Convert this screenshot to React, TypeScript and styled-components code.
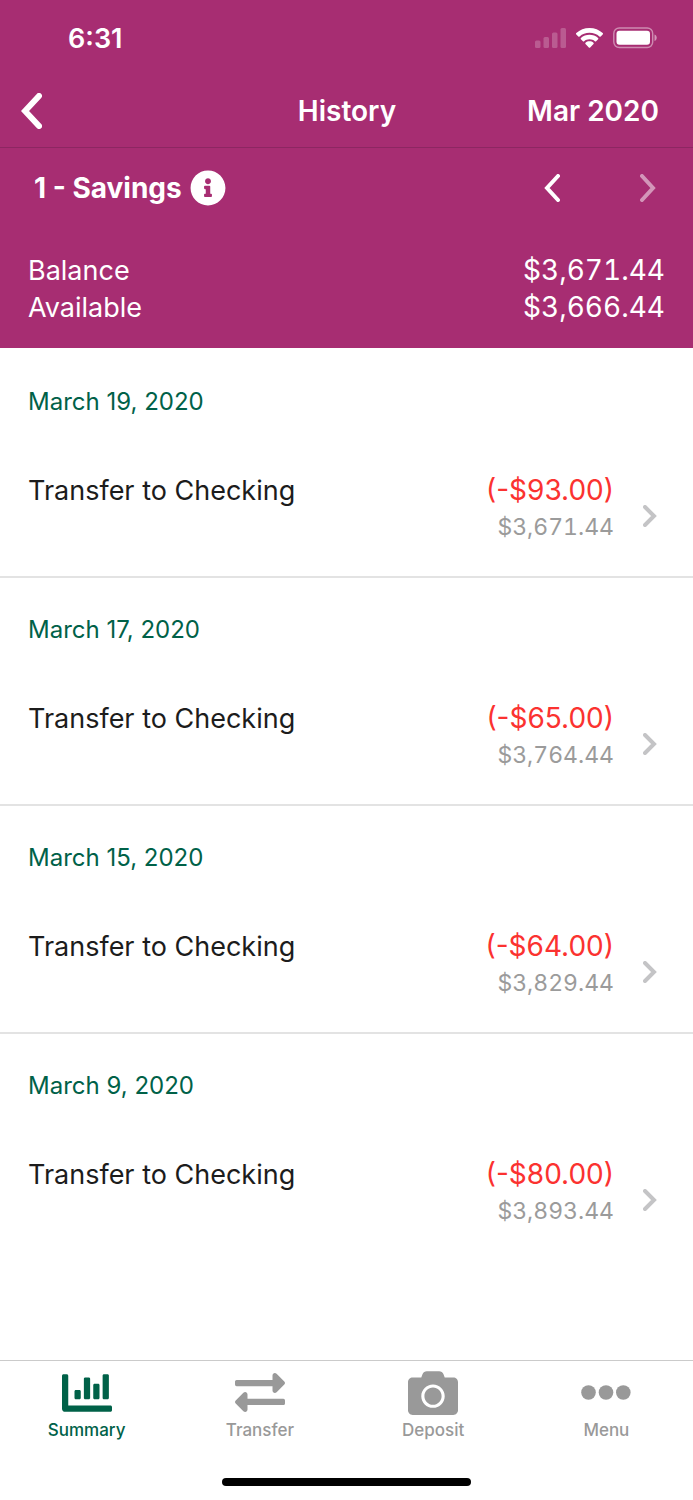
import React from 'react';
import styled, { createGlobalStyle } from 'styled-components';
import { FaCamera, FaChartBar, FaInfoCircle } from 'react-icons/fa';

const GlobalStyle = createGlobalStyle`
  *, *::before, *::after { box-sizing: border-box; }
  body {
    margin: 0;
    background: #fff;
    color: #1c1c1c;
    font-family: Inter, Roboto, sans-serif;
    -webkit-font-smoothing: antialiased;
  }
  button {
    margin: 0;
    padding: 0;
    border: 0;
    background: none;
    color: inherit;
    font: inherit;
    cursor: pointer;
  }
  h1, h2, h3, p, dl, dd, ul { margin: 0; padding: 0; }
  svg { display: block; }
`;

const Screen = styled.div`
  display: flex;
  flex-direction: column;
  min-height: 100vh;
`;

const Header = styled.header`
  background: #a72d72;
  color: #fff;
`;

const StatusBar = styled.div`
  display: flex;
  align-items: center;
  justify-content: space-between;
  height: 76px;
  padding: 0 36px 0 68px;
  font-size: 27px;
  font-weight: 600;
`;

const StatusIcons = styled.div`
  display: flex;
  align-items: center;
  gap: 10px;
`;

const TitleBar = styled.div`
  display: grid;
  grid-template-columns: 1fr auto 1fr;
  align-items: center;
  height: 72px;
  padding: 0 34px 2px 21px;
  border-bottom: 1px solid #8d2662;
`;

const Title = styled.h1`
  font-size: 28px;
  font-weight: 600;
  padding-left: 14px;
`;

const BackButton = styled.button`
  justify-self: start;
`;

const MonthButton = styled.button`
  && {
    justify-self: end;
    font-size: 28px;
    font-weight: 600;
  }
`;

const AccountBar = styled.div`
  display: flex;
  align-items: center;
  height: 80px;
  padding: 0 37px 0 34px;
`;

const AccountName = styled.h2`
  margin-right: 8px;
  font-size: 28px;
  font-weight: 700;
`;

const Pager = styled.div`
  display: flex;
  gap: 80px;
  margin-left: auto;
`;

const PagerButton = styled.button`
  &:disabled { opacity: 0.5; }
`;

const Balances = styled.dl`
  padding: 24px 28px 22px;
`;

const BalanceRow = styled.div`
  display: flex;
  justify-content: space-between;
  font-size: 27px;
  line-height: 37px;
`;

const Amount = styled.dd`
  font-size: 28px;
  font-variant-numeric: tabular-nums;
`;

const List = styled.ul`
  flex: 1;
  list-style: none;
`;

const Item = styled.li`
  height: 228px;
  padding-top: 36px;
  & + & { border-top: 2px solid #e3e3e3; padding-top: 34px; }
`;

const DateHeading = styled.h3`
  padding: 0 28px;
  color: #006148;
  font-size: 24px;
  font-weight: 400;
  line-height: 36px;
`;

const Entry = styled.button`
  && {
    display: flex;
    width: 100%;
    padding: 52px 36px 0 28px;
    text-align: left;
  }
`;

const Description = styled.span`
  flex: 1;
  font-size: 27px;
  line-height: 37px;
`;

const Figures = styled.span`
  display: flex;
  flex-direction: column;
  align-items: flex-end;
  margin-right: 29px;
  line-height: 37px;
`;

const Change = styled.span`
  color: #fb3230;
  font-size: 28px;
`;

const Running = styled.span`
  color: #9b9b9b;
  font-size: 23px;
  font-variant-numeric: tabular-nums;
`;

const EntryArrow = styled.span`
  align-self: center;
  padding-top: 14px;
  color: #c4c4c6;
`;

const Footer = styled.footer`
  display: flex;
  flex-direction: column;
  align-items: center;
  height: 140px;
  border-top: 1px solid #cbcbcb;
`;

const Tabs = styled.nav`
  display: grid;
  grid-template-columns: repeat(4, 1fr);
  width: 100%;
`;

const Tab = styled.button<{ $active?: boolean }>`
  && {
    display: flex;
    flex-direction: column;
    align-items: center;
    padding-top: 6px;
    color: ${(p) => (p.$active ? '#006148' : '#999')};
    font-size: 17px;
    font-weight: 500;
    line-height: 24px;
  }
`;

const TabIcon = styled.span`
  display: grid;
  place-items: center;
  height: 51px;
`;

const HomeIndicator = styled.div`
  width: 36%;
  height: 8px;
  margin: auto 0 14px;
  border-radius: 4px;
  background: #000;
`;

type ChevronProps = { dir: 'left' | 'right'; w: number; h: number; stroke: number };

function Chevron({ dir, w, h, stroke }: ChevronProps) {
  const s = stroke / 2;
  const near = dir === 'left' ? w - s : s;
  const tip = dir === 'left' ? s + 1 : w - s - 1;
  return (
    <svg width={w} height={h} viewBox={`0 0 ${w} ${h}`} fill="none" stroke="currentColor"
      strokeWidth={stroke} strokeLinecap="round" strokeLinejoin="miter" aria-hidden="true">
      <path d={`M${near} ${s}L${tip} ${h / 2}L${near} ${h - s}`} />
    </svg>
  );
}

function SignalIcon() {
  return (
    <svg width="31" height="20" viewBox="0 0 31 20" fill="#fff" opacity="0.22" aria-hidden="true">
      <rect x="0" y="12.5" width="5.5" height="7.5" rx="1.5" />
      <rect x="8.5" y="9" width="5.5" height="11" rx="1.5" />
      <rect x="17" y="4.5" width="5.5" height="15.5" rx="1.5" />
      <rect x="25.5" y="0" width="5.5" height="20" rx="1.5" />
    </svg>
  );
}

function WifiIcon() {
  return (
    <svg width="27" height="20" viewBox="0 0 27 20" fill="#fff" aria-hidden="true">
      <path d="M13.5 0C8.4 0 3.900 1.900.3 5.100c-.4.4-.4.900 0 1.300l2 2c.4.400.9.400 1.300 0C6.200 6 9.700 4.800 13.500 4.800s7.300 1.200 9.900 3.600c.4.400.9.400 1.300 0l2-2c.4-.4.400-.9 0-1.300C23.100 1.900 18.600 0 13.500 0z" />
      <path d="M13.500 6.700c-3.200 0-6.300 1.200-8.600 3.200-.4.400-.4.900 0 1.300l2 2c.4.400.9.400 1.300 0 1.400-1.200 3.200-1.900 5.300-1.900s3.900.7 5.300 1.900c.4.400.9.400 1.300 0l2-2c.4-.4.400-.9 0-1.300-2.300-2-5.400-3.200-8.600-3.200z" />
      <path d="M13.500 13.300c-1.500 0-2.900.5-4 1.400-.4.300-.4.900 0 1.300l3.300 3.500c.4.400 1 .4 1.400 0l3.300-3.500c.4-.4.400-1 0-1.300-1.100-.9-2.500-1.400-4-1.400z" />
    </svg>
  );
}

function BatteryIcon() {
  return (
    <svg width="44" height="22" viewBox="0 0 44 22" fill="none" aria-hidden="true">
      <rect x=".8" y="1" width="38.900" height="19.500" rx="5.500" stroke="#fff" strokeOpacity=".45" strokeWidth="1.400" />
      <rect x="3.500" y="3.700" width="33.500" height="14" rx="3" fill="#fff" />
      <path d="M41.500 7.500c1.500.6 2.200 1.800 2.200 3.200s-.7 2.600-2.200 3.200z" fill="#fff" fillOpacity=".5" />
    </svg>
  );
}

function TransferIcon() {
  return (
    <svg width="50" height="39" viewBox="0 0 50 39" fill="currentColor" aria-hidden="true">
      <path d="M1.600 6.900H37.500V2.500C37.500.2 40 -.8 41.600.8L49.300 8.500Q50.700 10 49.300 11.500L41.600 19.300C40 20.800 37.500 19.800 37.500 17.500V13.200H1.600Q0 13.200 0 11.600V8.500Q0 6.900 1.600 6.900z" />
      <path d="M48.400 25.800H12.500V21.500C12.500 19.200 10 18.200 8.400 19.700L.7 27.500Q-.7 29 .7 30.500L8.400 38.200C10 39.800 12.500 38.800 12.500 36.500V32.100H48.400Q50 32.100 50 30.500V27.400Q50 25.800 48.400 25.800z" />
    </svg>
  );
}

function DotsIcon() {
  return (
    <svg width="50" height="16" viewBox="0 0 50 16" fill="currentColor" aria-hidden="true">
      <circle cx="7.500" cy="7.500" r="7.300" />
      <circle cx="25" cy="7.500" r="7.300" />
      <circle cx="42.300" cy="7.500" r="7.300" />
    </svg>
  );
}

const transactions = [
  { date: 'March 19, 2020', change: '(-$93.00)', balance: '$3,671.44' },
  { date: 'March 17, 2020', change: '(-$65.00)', balance: '$3,764.44' },
  { date: 'March 15, 2020', change: '(-$64.00)', balance: '$3,829.44' },
  { date: 'March 9, 2020', change: '(-$80.00)', balance: '$3,893.44' },
];

const tabs = [
  { label: 'Summary', icon: <FaChartBar size={50} />, active: true },
  { label: 'Transfer', icon: <TransferIcon /> },
  { label: 'Deposit', icon: <FaCamera size={50} /> },
  { label: 'Menu', icon: <DotsIcon /> },
];

export default function App() {
  return (
    <Screen>
      <GlobalStyle />
      <Header>
        <StatusBar>
          <span>6:31</span>
          <StatusIcons>
            <SignalIcon />
            <WifiIcon />
            <BatteryIcon />
          </StatusIcons>
        </StatusBar>
        <TitleBar>
          <BackButton aria-label="Back"><Chevron dir="left" w={21} h={36} stroke={6} /></BackButton>
          <Title>History</Title>
          <MonthButton>Mar 2020</MonthButton>
        </TitleBar>
        <AccountBar>
          <AccountName>1 - Savings</AccountName>
          <button aria-label="Account information"><FaInfoCircle size={36} /></button>
          <Pager>
            <PagerButton aria-label="Previous account"><Chevron dir="left" w={16} h={28} stroke={4} /></PagerButton>
            <PagerButton aria-label="Next account" disabled><Chevron dir="right" w={16} h={28} stroke={4} /></PagerButton>
          </Pager>
        </AccountBar>
        <Balances>
          <BalanceRow><dt>Balance</dt><Amount>$3,671.44</Amount></BalanceRow>
          <BalanceRow><dt>Available</dt><Amount>$3,666.44</Amount></BalanceRow>
        </Balances>
      </Header>
      <List>
        {transactions.map((t) => (
          <Item key={t.date}>
            <DateHeading>{t.date}</DateHeading>
            <Entry>
              <Description>Transfer to Checking</Description>
              <Figures>
                <Change>{t.change}</Change>
                <Running>{t.balance}</Running>
              </Figures>
              <EntryArrow><Chevron dir="right" w={14} h={22} stroke={4} /></EntryArrow>
            </Entry>
          </Item>
        ))}
      </List>
      <Footer>
        <Tabs>
          {tabs.map((t) => (
            <Tab key={t.label} $active={t.active}>
              <TabIcon>{t.icon}</TabIcon>
              {t.label}
            </Tab>
          ))}
        </Tabs>
        <HomeIndicator />
      </Footer>
    </Screen>
  );
}
